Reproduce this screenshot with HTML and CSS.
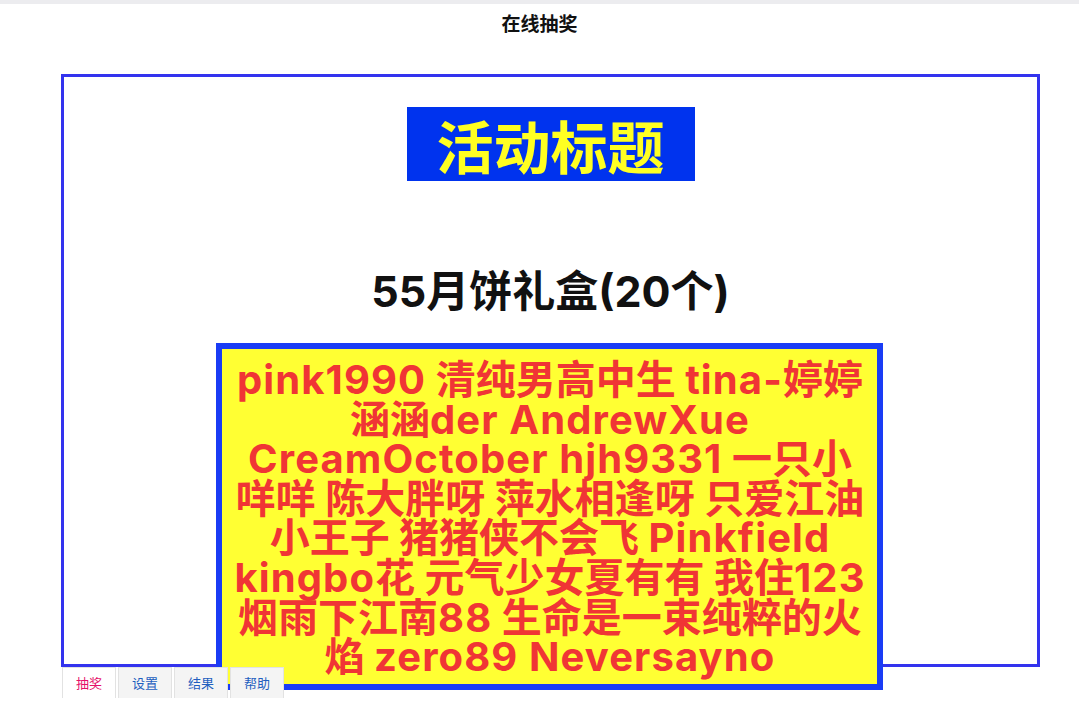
FILE: index.html
```html
<!DOCTYPE html>
<html lang="zh-CN">
<head>
<meta charset="utf-8">
<title>在线抽奖</title>
<link rel="stylesheet" href="styles.css">
</head>
<body>
<div class="topbar"></div>
<h1 class="page-title">在线抽奖</h1>
<div class="stage">
  <div class="event-title">活动标题</div>
  <div class="prize">55月饼礼盒(20个)</div>
</div>
<div class="winners"><span class="en">pink1990</span> 清纯男高中生 <span class="en">tina-</span>婷婷涵涵<span class="en">der AndrewXue CreamOctober hjh9331</span> 一只小咩咩 陈大胖呀 萍水相逢呀 只爱江油小王子 猪猪侠不会飞 <span class="en">Pinkfield kingbo</span>花 元气少女夏有有 我住<span class="en">123</span> 烟雨下江南<span class="en">88</span> 生命是一束纯粹的火焰 <span class="en">zero89 Neversayno</span></div>
<ul class="tabs">
  <li class="tab active">抽奖</li>
  <li class="tab">设置</li>
  <li class="tab">结果</li>
  <li class="tab">帮助</li>
</ul>
</body>
</html>
```
FILE: styles.css
```css
html, body {
  margin: 0;
  padding: 0;
  background: #fff;
  font-family: "Noto Sans CJK SC", "Noto Sans", sans-serif;
}
.topbar {
  height: 4px;
  background: #ececef;
}
.page-title {
  margin: 6px 0 0;
  height: 25px;
  line-height: 25px;
  text-align: center;
  font-size: 19px;
  font-weight: bold;
  color: #111;
}
.stage {
  margin: 39px 0 0 61px;
  width: 973px;
  height: 587px;
  border: 3px solid #3333ee;
  display: flex;
  flex-direction: column;
  align-items: center;
}
.event-title {
  margin-top: 30px;
  width: 288px;
  height: 74px;
  line-height: 74px;
  text-align: center;
  background: #0033ee;
  color: #ffff22;
  font-size: 57px;
  font-weight: bold;
}
.prize {
  margin-top: 80px;
  font-family: "Inter", "Noto Sans CJK SC", sans-serif;
  font-size: 43px;
  font-weight: bold;
  line-height: 60px;
  color: #111;
}
.winners {
  position: absolute;
  left: 216px;
  top: 343px;
  width: 636px;
  height: 324px;
  padding: 11px 9px 0 10px;
  border: 6px solid #1a3cf5;
  background: #ffff33;
  color: #f03535;
  font-family: "Inter", "Noto Sans CJK SC", sans-serif;
  font-size: 40px;
  font-weight: bold;
  line-height: 39.6px;
  text-align: center;
}
.winners .en {
  letter-spacing: 1.1px;
}
.tabs {
  position: relative;
  z-index: 2;
  list-style: none;
  margin: 0 0 0 62px;
  padding: 0;
  display: flex;
  gap: 2px;
}
.tab {
  width: 52px;
  height: 30px;
  line-height: 30px;
  text-align: center;
  font-size: 13px;
  color: #1f5fbf;
  background: #f4f4f4;
  border: 1px solid #e2e2e2;
  border-bottom: none;
}
.tab.active {
  background: #fff;
  color: #e5106a;
}
```
